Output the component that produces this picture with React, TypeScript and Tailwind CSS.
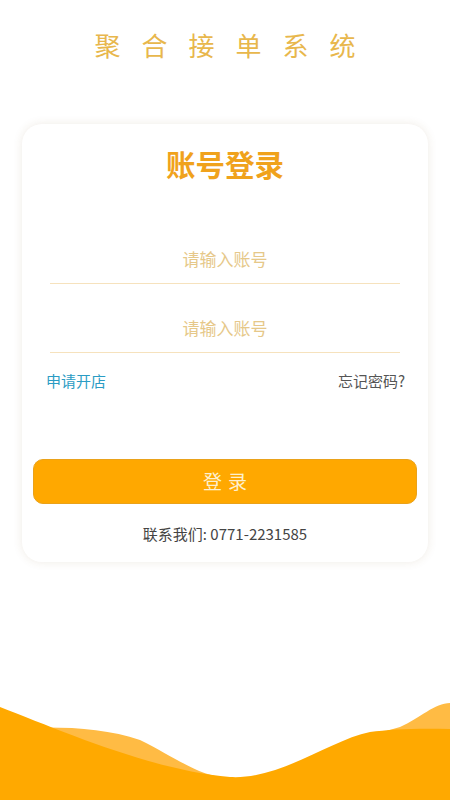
export default function App() {
  return (
    <div
      className="relative flex min-h-[800px] w-full flex-col overflow-hidden bg-white"
      style={{ fontFamily: '"Noto Sans CJK SC", "Noto Sans", sans-serif' }}
    >
      {/* Title */}
      <h1 className="pt-[29px] pl-[21px] text-center text-[26px] leading-[32px] tracking-[21px] text-[#e8b74c]">
        聚合接单系统
      </h1>

      {/* Login card */}
      <div className="mx-[22px] mt-[63px] flex flex-col rounded-[20px] bg-white pt-[21px] pb-[18px] shadow-[0_0_10px_rgba(120,90,40,0.12)]">
        <h2 className="text-center text-[29.5px] font-bold leading-[36px] text-[#f0a21c]">账号登录</h2>

        <div className="mx-[28px] mt-[54px] flex h-[49px] items-center justify-center border-b border-[#f6e2bd]">
          <input
            className="w-full bg-transparent text-center text-[17px] text-[#555] outline-none placeholder:text-[#e6c889]"
            placeholder="请输入账号"
          />
        </div>
        <div className="mx-[28px] mt-[20px] flex h-[49px] items-center justify-center border-b border-[#f6e2bd]">
          <input
            className="w-full bg-transparent text-center text-[17px] text-[#555] outline-none placeholder:text-[#e6c889]"
            placeholder="请输入账号"
          />
        </div>

        <div className="mt-[18px] flex items-center justify-between pl-[24px] pr-[23px] text-[15px] leading-[20px]">
          <span className="text-[#2b9cc4]">申请开店</span>
          <span className="text-[#555]">忘记密码?</span>
        </div>

        <button className="mx-[11px] mt-[68px] h-[45px] rounded-[10px] border border-[#eaa21a] bg-[#ffa800] text-[19px] tracking-[6px] pl-[6px] text-[#fdf0d0]">
          登录
        </button>

        <p className="mt-[20px] text-center text-[15px] leading-[20px] text-[#444]">联系我们: 0771-2231585</p>
      </div>

      {/* Bottom waves */}
      <svg
        className="absolute bottom-0 left-0 h-[100px] w-[450px]"
        viewBox="0 0 450 100"
        preserveAspectRatio="none"
      >
        <path
          d="M0,29 C50,26 100,26 140,40 C180,60 200,77 230,78 C300,78 350,40 400,27 C420,18 435,3 450,3 V100 H0 Z"
          fill="#ffbb44"
        />
        <path
          d="M0,7 C60,30 150,70 230,77 C280,80 330,40 370,32 C390,29 420,28 450,29 V100 H0 Z"
          fill="#ffa900"
        />
      </svg>
    </div>
  );
}
